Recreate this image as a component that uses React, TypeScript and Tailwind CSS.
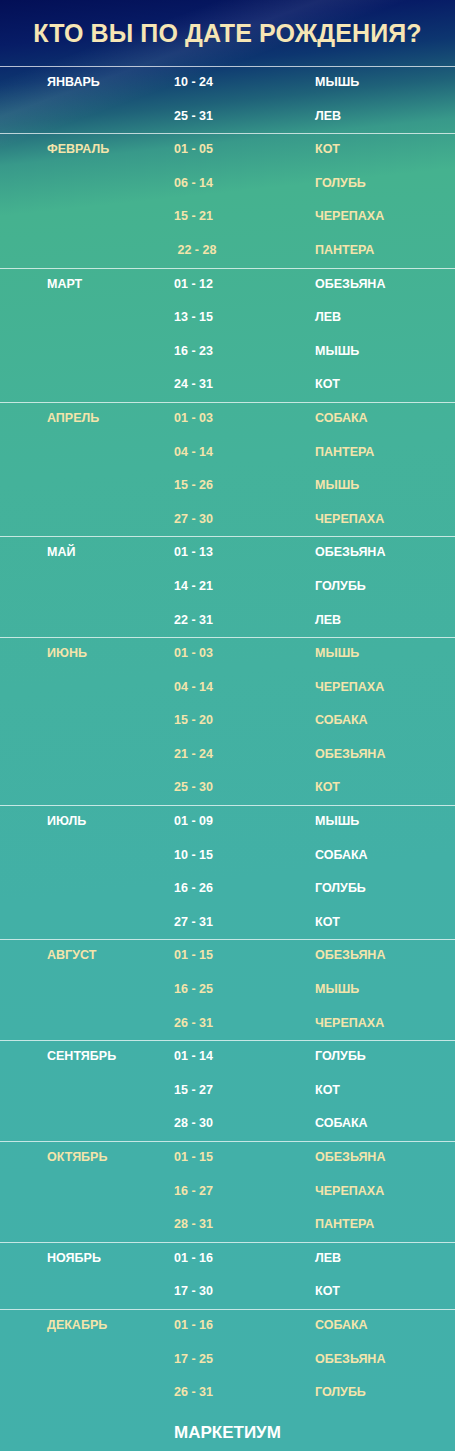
/**
 * Birth-date animal table - "Кто вы по дате рождения?"
 */

type Month = {
  name: string;
  rows: [string, string][];
};

const months: Month[] = [
  { name: 'ЯНВАРЬ', rows: [['10 - 24', 'МЫШЬ'], ['25 - 31', 'ЛЕВ']] },
  {
    name: 'ФЕВРАЛЬ',
    rows: [['01 - 05', 'КОТ'], ['06 - 14', 'ГОЛУБЬ'], ['15 - 21', 'ЧЕРЕПАХА'], [' 22 - 28', 'ПАНТЕРА']],
  },
  {
    name: 'МАРТ',
    rows: [['01 - 12', 'ОБЕЗЬЯНА'], ['13 - 15', 'ЛЕВ'], ['16 - 23', 'МЫШЬ'], ['24 - 31', 'КОТ']],
  },
  {
    name: 'АПРЕЛЬ',
    rows: [['01 - 03', 'СОБАКА'], ['04 - 14', 'ПАНТЕРА'], ['15 - 26', 'МЫШЬ'], ['27 - 30', 'ЧЕРЕПАХА']],
  },
  { name: 'МАЙ', rows: [['01 - 13', 'ОБЕЗЬЯНА'], ['14 - 21', 'ГОЛУБЬ'], ['22 - 31', 'ЛЕВ']] },
  {
    name: 'ИЮНЬ',
    rows: [
      ['01 - 03', 'МЫШЬ'],
      ['04 - 14', 'ЧЕРЕПАХА'],
      ['15 - 20', 'СОБАКА'],
      ['21 - 24', 'ОБЕЗЬЯНА'],
      ['25 - 30', 'КОТ'],
    ],
  },
  {
    name: 'ИЮЛЬ',
    rows: [['01 - 09', 'МЫШЬ'], ['10 - 15', 'СОБАКА'], ['16 - 26', 'ГОЛУБЬ'], ['27 - 31', 'КОТ']],
  },
  { name: 'АВГУСТ', rows: [['01 - 15', 'ОБЕЗЬЯНА'], ['16 - 25', 'МЫШЬ'], ['26 - 31', 'ЧЕРЕПАХА']] },
  { name: 'СЕНТЯБРЬ', rows: [['01 - 14', 'ГОЛУБЬ'], ['15 - 27', 'КОТ'], ['28 - 30', 'СОБАКА']] },
  { name: 'ОКТЯБРЬ', rows: [['01 - 15', 'ОБЕЗЬЯНА'], ['16 - 27', 'ЧЕРЕПАХА'], ['28 - 31', 'ПАНТЕРА']] },
  { name: 'НОЯБРЬ', rows: [['01 - 16', 'ЛЕВ'], ['17 - 30', 'КОТ']] },
  { name: 'ДЕКАБРЬ', rows: [['01 - 16', 'СОБАКА'], ['17 - 25', 'ОБЕЗЬЯНА'], ['26 - 31', 'ГОЛУБЬ']] },
];

export default function App() {
  return (
    <div
      className="w-[455px] min-h-[1451px] overflow-hidden font-['Liberation_Sans',Arial,sans-serif] font-bold bg-[linear-gradient(160deg,transparent_75px,rgba(255,255,255,0.08)_110px,transparent_140px),linear-gradient(174deg,#030f56_0px,#071c66_45px,#0d3670_85px,#1f6279_125px,#38998a_165px,#45b28f_215px,#44b29a_480px,#42b0a6_900px,#42b0aa_1451px)]"
    >
      {/* Title */}
      <div className="h-[66px] flex items-center justify-center">
        <h1 className="text-[25px] leading-none text-[#f6e6b4] tracking-[0.1px] pt-[1px]">
          КТО ВЫ ПО ДАТЕ РОЖДЕНИЯ?
        </h1>
      </div>

      {/* Table */}
      {months.map((m, mi) => {
        const color = mi % 2 === 0 ? 'text-white' : 'text-[#f4e4ab]';
        return (
          <div key={m.name} className={`border-t border-white/70 text-[12.5px] leading-[14px] ${color}`}>
            {m.rows.map(([dates, animal], ri) => (
              <div
                key={ri}
                className={`grid grid-cols-[127px_141px_1fr] pl-[47px] ${
                  ri === 0 ? 'h-[32.6px] pt-[8px]' : 'h-[33.6px] pt-[9px]'
                }`}
              >
                <span>{ri === 0 ? m.name : ''}</span>
                <span className="whitespace-pre">{dates}</span>
                <span>{animal}</span>
              </div>
            ))}
          </div>
        );
      })}

      {/* Footer */}
      <div className="h-[41px] pl-[174px] pt-[11px]">
        <span className="text-[17px] leading-[20px] text-white">МАРКЕТИУМ</span>
      </div>
    </div>
  );
}
